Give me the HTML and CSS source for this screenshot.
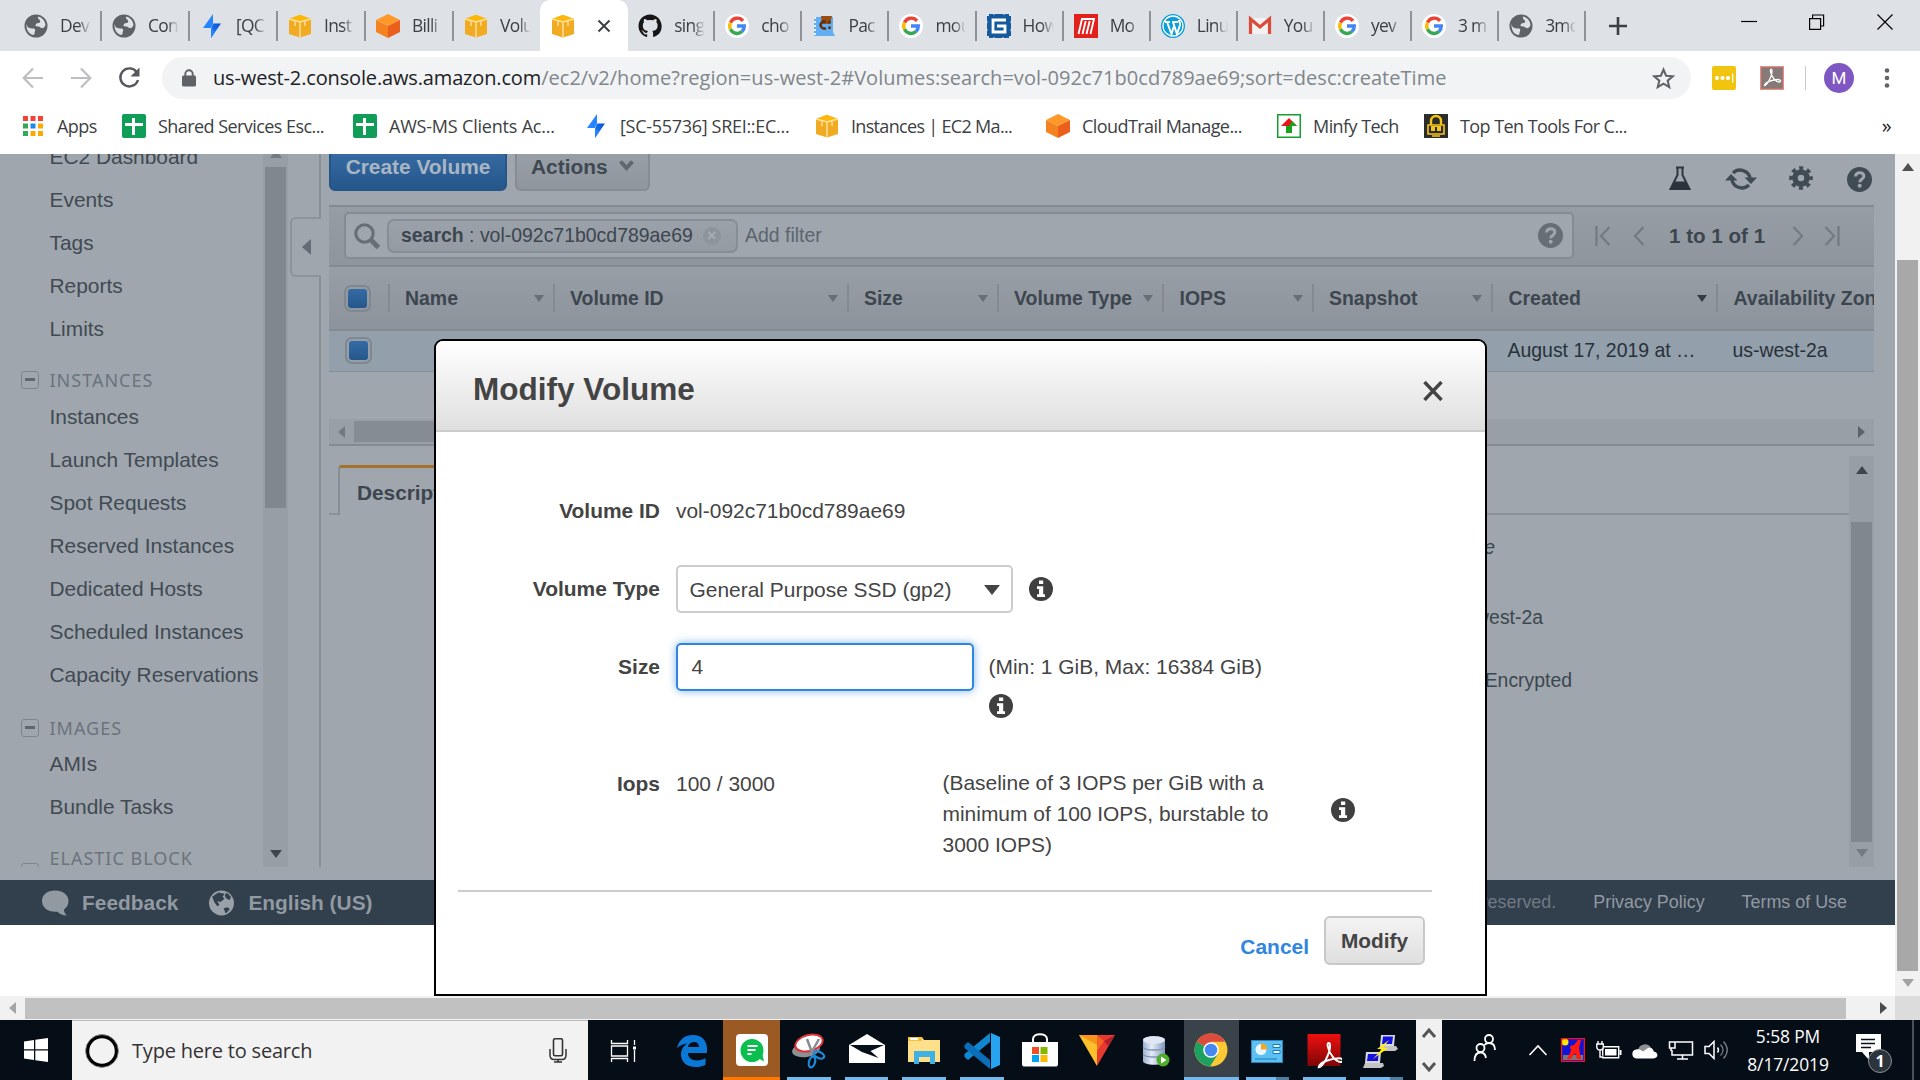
FILE: index.html
```html
<!DOCTYPE html>
<html lang="en">
<head>
<meta charset="utf-8">
<title>Volumes | EC2 Management Console</title>
<link rel="stylesheet" href="styles.css">
</head>
<body>
<svg class="defs" width="0" height="0">
  <defs>
    <linearGradient id="g-red" x1="0" y1="0" x2="0" y2="1"><stop offset="0" stop-color="#f01010"/><stop offset="1" stop-color="#7c0606"/></linearGradient>
    <linearGradient id="g-bolt" x1="1" y1="0" x2="0" y2="1"><stop offset="0" stop-color="#0052cc"/><stop offset="1" stop-color="#2684ff"/></linearGradient>
    <linearGradient id="g-db" x1="0" x2="1"><stop offset="0" stop-color="#9fb2cf"/><stop offset=".4" stop-color="#e4edf8"/><stop offset="1" stop-color="#8398bb"/></linearGradient>
  </defs>
  <symbol id="globe" viewBox="0 0 24 24"><circle cx="12" cy="12" r="11.5" fill="#5f6368"/><path d="M2.500 9.500C3 14 5.500 14.500 9.500 14.500c1.500 0 2 1 1.500 2.500l-1 4C6 21 2 17 2.500 9.500zM14 2.500c4 1 7 4 7.500 8.500-1 3-3 4-5 2.500-1.500-1.200-3-1-5-1.500 0-2 1-3 3-3 1.500 0 2-1 1.500-2.500-.5-1.200-2.500-1-2-4z" fill="#dee1e6"/></symbol>
  <symbol id="bolt" viewBox="0 0 24 24"><path d="M13 0 3 14h8l2-5z" fill="#2684ff"/><path d="M11 24 21 9.500h-8L11 15z" fill="url(#g-bolt)"/><path d="M11 13.500V24l4-6z" fill="#2684ff"/></symbol>
  <symbol id="cube-y" viewBox="0 0 24 24"><path d="M1 5 12 1l11 4v15l-11 3.500L1 20z" fill="#f0ab23"/><path d="M1 5 12 .8 23 5l-11 3z" fill="#ffb70a"/><path d="M12 8v15M1 5l11 3 11-3" fill="none" stroke="#ffe3a0" stroke-width="1.400"/><path d="M7 7v5M17 7v5" stroke="#ffe3a0" stroke-width="1.300"/></symbol>
  <symbol id="cube-o" viewBox="0 0 24 24"><path d="M12 0 24 6 12 12 0 6z" fill="#ff9a2a"/><path d="M0 6l12 6v12L0 18z" fill="#f58220"/><path d="M24 6 12 12v12l12-6z" fill="#ea5f1b"/></symbol>
  <symbol id="github" viewBox="0 0 24 24"><path fill="#171515" d="M12 .5C5.600.5.5 5.600.5 12c0 5.100 3.300 9.400 7.900 10.900.6.1.8-.3.8-.6v-2c-3.200.7-3.900-1.500-3.900-1.500-.5-1.300-1.300-1.700-1.300-1.700-1-.7.1-.7.1-.7 1.200.1 1.800 1.200 1.800 1.200 1 1.800 2.700 1.300 3.400 1 .1-.8.400-1.300.7-1.600-2.600-.3-5.200-1.300-5.200-5.700 0-1.300.4-2.300 1.200-3.100-.1-.3-.5-1.500.1-3.100 0 0 1-.3 3.200 1.200a11 11 0 0 1 5.800 0c2.200-1.500 3.200-1.200 3.200-1.200.6 1.600.2 2.800.1 3.100.7.800 1.200 1.800 1.200 3.100 0 4.400-2.700 5.400-5.300 5.700.4.4.8 1.100.8 2.100v3.200c0 .3.200.7.800.6a11.500 11.500 0 0 0 7.800-10.900C23.500 5.600 18.400.5 12 .5z"/></symbol>
  <symbol id="google" viewBox="0 0 24 24"><circle cx="12" cy="12" r="12" fill="#fff"/><g fill="none" stroke-width="3.400"><path d="M18 6.900A7.300 7.300 0 0 0 5.500 8.700" stroke="#ea4335"/><path d="M5.500 8.700a7.300 7.300 0 0 0 0 6.600" stroke="#fbbc05"/><path d="M5.500 15.300A7.300 7.300 0 0 0 17 17.500" stroke="#34a853"/><path d="M12 12h7.300a7.300 7.300 0 0 1-2.300 5.500" stroke="#4285f4"/></g></symbol>
  <symbol id="book" viewBox="0 0 24 24"><path d="M2 3h19v15l2 4H2z" fill="#63aef0"/><path d="M9 2h11l-2 8h-8z" fill="#9a4d12"/><path d="M3 3v18" stroke="#dff0ff" stroke-width="2" stroke-dasharray="2 2"/><path d="M14 8a3.500 3.500 0 1 0 0 6M17.500 7v2.500m0 3V15" fill="none" stroke="#5a3216" stroke-width="2.500"/></symbol>
  <symbol id="gbox" viewBox="0 0 24 24"><path d="M0 2h2V0h4l1 1 1-1h8l1 1 1-1h4v2h2v5l-1 1 1 1v6l-1 1 1 1v5h-2v2h-5l-1-1-1 1H8l-1-1-1 1H2v-2H0v-5l1-1-1-1V9l1-1-1-1z" fill="#155a9c"/><path d="M19 6H6v12h12v-6h-8" fill="none" stroke="#fff" stroke-width="2.800"/></symbol>
  <symbol id="redm" viewBox="0 0 24 24"><path d="M0 0h24v24H0z" fill="#e2211c"/><path d="M4.500 20 8 5h12l-3.500 15M11.700 7 8.500 20M15.700 7 12.500 20" fill="none" stroke="#fff" stroke-width="1.900"/></symbol>
  <symbol id="wp" viewBox="0 0 24 24"><circle cx="12" cy="12" r="12" fill="#0a9fd8"/><circle cx="12" cy="12" r="10" fill="none" stroke="#fff" stroke-width="1.300"/><path d="M4 8h5M11 8h6M6 8l4.500 12L13 12M12 8l4 12 3-9c.6-2-1-3-1-5" fill="none" stroke="#fff" stroke-width="2"/></symbol>
  <symbol id="gmail" viewBox="0 0 24 24"><path d="M2 4h20v16H2z" fill="#f2f2f2"/><path d="M2.500 20V5L12 13l9.500-8v15" fill="none" stroke="#dd4b39" stroke-width="3.200"/></symbol>
  <symbol id="sheet" viewBox="0 0 24 24"><rect width="24" height="24" rx="2" fill="#109d58"/><path d="M11.500 4v17M3 10.500h18" stroke="#fff" stroke-width="3"/></symbol>
  <symbol id="apps" viewBox="0 0 20 20"><path d="M0 0h5v5H0zm7.500 0h5v5h-5zM15 0h5v5h-5z" fill="#f44336"/><path d="M0 7.500h5v5H0zM0 15h5v5H0z" fill="#34a853"/><path d="M7.500 7.500h5v5h-5z" fill="#1e88e5"/><path d="M15 7.500h5v5h-5zM7.500 15h5v5h-5zm7.500 0h5v5h-5z" fill="#fbab00"/></symbol>
  <symbol id="minfy" viewBox="0 0 24 24"><rect x=".75" y=".75" width="22.500" height="22.500" fill="#fff" stroke="#14a02c" stroke-width="1.500"/><path d="M12 4 4 12h16z" fill="#e8161b"/><path d="M9 12h6v7H9z" fill="#17a31b"/><path d="m12 12 8 0-5-5z" fill="#17a31b"/></symbol>
  <symbol id="lockbox" viewBox="0 0 24 24"><path d="M0 0h24v24H0z" fill="#2c2c2c"/><path d="M7 11V7a5 5 0 0 1 10 0v4" fill="none" stroke="#f5c518" stroke-width="2.400"/><path d="M4 11h16v9H4zM8 22h8" fill="none" stroke="#f5c518" stroke-width="1.600"/><path d="M7 12h10v5H7z" fill="#f5c518"/><path d="M12 13v4" stroke="#2c2c2c" stroke-width="2"/></symbol>
  <symbol id="info" viewBox="0 0 24 24"><circle cx="12" cy="12" r="12" fill="#404040"/><path d="M10 3.500h4.200v3.400H10zM8 9.300h6.200v7.900H16V20H8v-2.800h2v-5.100H8z" fill="#fff"/></symbol>
  <symbol id="help" viewBox="0 0 24 24"><circle cx="12" cy="12" r="12" fill="currentColor"/><path d="M8.200 9.200c0-5 8-5 8-.3 0 3-4 2.700-4 5.700" fill="none" stroke="#9fa6ae" stroke-width="2.900"/><circle cx="12.200" cy="18" r="1.900" fill="#9fa6ae"/></symbol>
  <symbol id="acro" viewBox="0 0 24 24"><path d="M4.500 19.500c2.500 0 8-9.500 7.500-15-.2-2-2-1.500-1.500 1C11.500 11 16 16 19 16c2.500 0 2-2.500-1-2.500-4.500 0-13 2.500-13.500 6z" fill="none" stroke="#fff" stroke-width="1.300"/></symbol>
</svg>

<header class="tabs">
  <div class="tab"><svg class="i24"><use href="#globe"/></svg><span>Dev</span></div>
  <div class="tab"><svg class="i24"><use href="#globe"/></svg><span>Con</span></div>
  <div class="tab"><svg class="i24"><use href="#bolt"/></svg><span>[QC</span></div>
  <div class="tab"><svg class="i24"><use href="#cube-y"/></svg><span>Inst</span></div>
  <div class="tab"><svg class="i24"><use href="#cube-o"/></svg><span>Billi</span></div>
  <div class="tab tab-last"><svg class="i24"><use href="#cube-y"/></svg><span>Volu</span></div>
  <div class="tab tab-active"><svg class="i24"><use href="#cube-y"/></svg><svg class="tab-x" viewBox="0 0 14 14"><path d="M1.500 1.500 12.500 12.500M12.500 1.500 1.500 12.500" stroke="#3c4043" stroke-width="2"/></svg></div>
  <div class="tab"><svg class="i24"><use href="#github"/></svg><span>sing</span></div>
  <div class="tab"><svg class="i24"><use href="#google"/></svg><span>cho</span></div>
  <div class="tab"><svg class="i24"><use href="#book"/></svg><span>Pac</span></div>
  <div class="tab"><svg class="i24"><use href="#google"/></svg><span>mou</span></div>
  <div class="tab"><svg class="i24"><use href="#gbox"/></svg><span>How</span></div>
  <div class="tab"><svg class="i24"><use href="#redm"/></svg><span>Mo</span></div>
  <div class="tab"><svg class="i24"><use href="#wp"/></svg><span>Linu</span></div>
  <div class="tab"><svg class="i24"><use href="#gmail"/></svg><span>You</span></div>
  <div class="tab"><svg class="i24"><use href="#google"/></svg><span>yev</span></div>
  <div class="tab"><svg class="i24"><use href="#google"/></svg><span>3 m</span></div>
  <div class="tab"><svg class="i24"><use href="#globe"/></svg><span>3mo</span></div>
  <svg class="tab-new" viewBox="0 0 18 18"><path d="M9 0v18M0 9h18" stroke="#3c4043" stroke-width="2.600"/></svg>
  <div class="winctl">
    <svg width="16" height="16"><path d="M0 7.500h16" stroke="#000" stroke-width="1.200"/></svg>
    <svg width="16" height="16"><path d="M.6 4.600h11v10.800H.6zM3.600 4.600V1h11v11h-3" fill="none" stroke="#000" stroke-width="1.200"/></svg>
    <svg width="16" height="16"><path d="M.5.500l15 15M15.500.5l-15 15" stroke="#000" stroke-width="1.200"/></svg>
  </div>
</header>

<div class="toolbar">
  <svg class="nav-ic" viewBox="0 0 22 22"><path d="M21 11H2M11 1.500 1.700 11 11 20.500" fill="none" stroke="#bcbec0" stroke-width="2.200"/></svg>
  <svg class="nav-ic" viewBox="0 0 22 22"><path d="M1 11h19M11 1.500 20.300 11 11 20.500" fill="none" stroke="#bcbec0" stroke-width="2.200"/></svg>
  <svg class="nav-ic" viewBox="0 0 22 22"><path d="M18.600 5A9 9 0 1 0 20 13" fill="none" stroke="#54585c" stroke-width="2.400"/><path d="M21.500.5v9h-9z" fill="#54585c"/></svg>
  <div class="urlbar">
    <svg class="lock" viewBox="0 0 14 18"><rect y="6.500" width="14" height="11" rx="1.500" fill="#5f6368"/><path d="M3.300 8V5a3.700 3.700 0 0 1 7.400 0v3" fill="none" stroke="#5f6368" stroke-width="1.900"/></svg>
    <span class="url"><span class="host">us-west-2.console.aws.amazon.com</span><span class="path">/ec2/v2/home?region=us-west-2#Volumes:search=vol-092c71b0cd789ae69;sort=desc:createTime</span></span>
    <svg class="star" viewBox="0 0 22 22"><path d="m11 2.500 2.500 5.900 6.300.5-4.800 4.200 1.500 6.200L11 16l-5.500 3.300L7 13.100 2.200 8.900l6.300-.5z" fill="none" stroke="#5f6368" stroke-width="2"/></svg>
  </div>
  <svg class="ext" viewBox="0 0 24 24"><rect width="24" height="24" rx="2" fill="#f1c40f"/><g fill="#fff"><circle cx="5" cy="12" r="2.100"/><circle cx="10.500" cy="12" r="2.100"/><circle cx="16" cy="12" r="2.100"/><path d="M20 7.500h1.300v9H20z"/></g></svg>
  <svg class="ext" viewBox="0 0 24 24"><path d="M.6.6h22.800v22.800H.6z" fill="#857a78" stroke="#f08a80" stroke-width="1.200"/><use href="#acro"/></svg>
  <i class="tool-sep"></i>
  <span class="avatar">M</span>
  <svg class="dots" viewBox="0 0 6 20"><g fill="#5f6368"><circle cx="3" cy="2.500" r="2.300"/><circle cx="3" cy="10" r="2.300"/><circle cx="3" cy="17.500" r="2.300"/></g></svg>
</div>

<nav class="bookmarks">
  <a class="bm b0"><svg class="i20"><use href="#apps"/></svg>Apps</a>
  <a class="bm b1"><svg class="i24"><use href="#sheet"/></svg>Shared Services Esc...</a>
  <a class="bm b2"><svg class="i24"><use href="#sheet"/></svg>AWS-MS Clients Ac...</a>
  <a class="bm b3"><svg class="i24"><use href="#bolt"/></svg>[SC-55736] SREI::EC...</a>
  <a class="bm b4"><svg class="i24"><use href="#cube-y"/></svg>Instances | EC2 Ma...</a>
  <a class="bm b5"><svg class="i24"><use href="#cube-o"/></svg>CloudTrail Manage...</a>
  <a class="bm b6"><svg class="i24"><use href="#minfy"/></svg>Minfy Tech</a>
  <a class="bm b7"><svg class="i24"><use href="#lockbox"/></svg>Top Ten Tools For C...</a>
  <span class="more">»</span>
</nav>

<div class="viewport">
  <div class="page">
    <div class="console">
      <aside class="side">
        <div class="side-list">
          <a>EC2 Dashboard</a><a>Events</a><a>Tags</a><a>Reports</a><a>Limits</a>
          <h4><i></i>INSTANCES</h4>
          <a>Instances</a><a>Launch Templates</a><a>Spot Requests</a><a>Reserved Instances</a><a>Dedicated Hosts</a><a>Scheduled Instances</a><a>Capacity Reservations</a>
          <h4 class="images"><i></i>IMAGES</h4>
          <a>AMIs</a><a>Bundle Tasks</a>
          <h4><i class="low"></i>ELASTIC BLOCK</h4>
        </div>
        <div class="vbar side-bar"><i class="up faint"></i><b></b><i class="down"></i></div>
        <div class="gutter"><div class="fold"><i></i></div></div>
      </aside>

      <main class="main">
        <div class="actions">
          <button class="btn-blue">Create Volume</button>
          <button class="btn-gray">Actions <svg width="15" height="12" viewBox="0 0 15 12"><path d="m1.500 1.500 6 6.500 6-6.500" fill="none" stroke="#5f6871" stroke-width="4"/></svg></button>
          <div class="tools">
            <svg class="t-flask" viewBox="0 0 24 26"><path d="M8 1.500h8M9.500 2v7L2.500 23h19l-7-14V2" fill="none" stroke="#2e3740" stroke-width="2"/><path d="M6 15.500h12L22 24H2z" fill="#2a333c"/></svg>
            <svg class="t-sync" viewBox="0 0 32 26"><path d="M8 7a10 9.500 0 0 1 17 5M24 19a10 9.500 0 0 1-17-5" fill="none" stroke="#414b54" stroke-width="3.400"/><path d="M0 14.500h12.500L6 8zM19.500 11.500H32L26 18z" fill="#414b54"/></svg>
            <svg class="t-gear" viewBox="0 0 24 24"><circle cx="12" cy="12" r="6" fill="none" stroke="#414b54" stroke-width="5.500"/><circle cx="12" cy="12" r="9.700" fill="none" stroke="#414b54" stroke-width="4.200" stroke-dasharray="3.900 3.718" stroke-dashoffset="2"/></svg>
            <svg class="t-help i25"><use href="#help"/></svg>
          </div>
        </div>

        <div class="filter">
          <div class="fbox">
            <svg class="mag" viewBox="0 0 26 26"><circle cx="10.500" cy="10.500" r="8.700" fill="none" stroke="#666e76" stroke-width="3"/><path d="m17 17 7.500 7.500" stroke="#666e76" stroke-width="5"/></svg>
            <span class="chip"><b>search</b>&nbsp;: vol-092c71b0cd789ae69 <i>×</i></span>
            <span class="add">Add filter</span>
            <svg class="f-help i25"><use href="#help"/></svg>
          </div>
          <div class="pager">
            <svg width="16" height="20"><path d="M1.500 0v20M14.500 1 6 10l8.500 9" fill="none" stroke="#737b83" stroke-width="2.300"/></svg>
            <svg width="12" height="20"><path d="M10.500 1 2 10l8.500 9" fill="none" stroke="#737b83" stroke-width="2.300"/></svg>
            <b>1 to 1 of 1</b>
            <svg width="12" height="20"><path d="M1.500 1 10 10l-8.500 9" fill="none" stroke="#737b83" stroke-width="2.300"/></svg>
            <svg width="16" height="20"><path d="M14.500 0v20M1.500 1 10 10l-8.500 9" fill="none" stroke="#737b83" stroke-width="2.300"/></svg>
          </div>
        </div>

        <div class="grid head">
          <div class="ck"><i></i></div><div>Name</div><div>Volume ID</div><div>Size</div><div>Volume Type</div><div>IOPS</div><div>Snapshot</div><div class="sorted">Created</div><div class="last">Availability Zone</div>
        </div>
        <div class="grid row">
          <div class="ck"><i></i></div><div></div><div></div><div></div><div></div><div></div><div></div><div>August 17, 2019 at …</div><div>us-west-2a</div>
        </div>
        <div class="hbar grid-bar"><i class="left faint"></i><b></b><i class="right"></i></div>

        <section class="details">
          <div class="pane">
            <div class="tabline"><span class="dtab">Description</span></div>
            <p class="d1">in-use</p>
            <p class="d2">us-west-2a</p>
            <p class="d3">Not Encrypted</p>
          </div>
          <div class="vbar det-bar"><i class="up"></i><b></b><i class="down faint"></i></div>
        </section>
      </main>
    </div>

    <footer class="foot">
      <svg class="bubble" viewBox="0 0 27 25"><path d="M13 0c8 0 13.500 4.500 13.500 10.500 0 4-2 7-4.500 8.500 0 2.500 1 4.500 3 6-4 0-7.500-1.500-9.500-3.800C6 22 0 17 0 10.500 0 4.500 5 0 13 0z" fill="#9199a1"/></svg>
      <b class="fb">Feedback</b>
      <svg class="world" viewBox="0 0 24 24"><circle cx="12" cy="12" r="12" fill="#9aa1a8"/><path d="m3 6 6-4 6 1-2 3 2 2-4 3-3-1 2 4-2 1-3-4zM17 2l4 4-1 3-3-1-2-3zM14 17l4-1 2 2-4 4z" fill="#323f4d"/></svg>
      <b>English (US)</b>
      <span class="rights">All rights reserved.</span>
      <a>Privacy Policy</a>
      <a class="terms">Terms of Use</a>
    </footer>

    <div class="modal">
      <div class="m-head"><h2>Modify Volume</h2><svg width="20" height="20"><path d="m1.500 1 17 18M18.500 1l-17 18" stroke="#444" stroke-width="3.400"/></svg></div>
      <div class="m-body">
        <div class="f-row r-id"><label>Volume ID</label><span>vol-092c71b0cd789ae69</span></div>
        <div class="f-row r-type"><label>Volume Type</label><div class="select">General Purpose SSD (gp2)<i></i></div><svg class="i24 gap16"><use href="#info"/></svg></div>
        <div class="f-row r-size"><label>Size</label><div class="input">4</div><span class="hint">(Min: 1 GiB, Max: 16384 GiB)</span></div>
        <div class="f-row r-info"><svg class="i24"><use href="#info"/></svg></div>
        <div class="f-row r-iops"><label>Iops</label><span class="iops">100 / 3000</span><p>(Baseline of 3 IOPS per GiB with a minimum of 100 IOPS, burstable to 3000 IOPS)</p><svg class="i24"><use href="#info"/></svg></div>
      </div>
      <div class="m-foot"><a>Cancel</a><button class="modify">Modify</button></div>
    </div>
  </div>
  <div class="vbar page-bar"><i class="up"></i><b></b><i class="down faint"></i></div>
</div>
<div class="hbar page-hbar"><i class="left faint"></i><b></b><i class="right"></i><span class="corner"></span></div>

<div class="taskbar">
  <div class="start"><svg width="24" height="24" viewBox="0 0 24 24"><path d="M0 3.500 10 2v9.300H0zM11.300 1.800 24 0v11.300H11.300zM0 12.500h10V22L0 20.500zM11.300 12.500H24V24l-12.700-1.800z" fill="#fff"/></svg></div>
  <div class="search">
    <svg width="34" height="34" viewBox="0 0 34 34"><circle cx="17" cy="17" r="14.600" fill="none" stroke="#000" stroke-width="3.600"/><circle cx="17" cy="17" r="16.400" fill="none" stroke="#8a8a8a" stroke-width=".8"/></svg>
    <span>Type here to search</span>
    <svg class="mic" width="18" height="25" viewBox="0 0 18 25"><rect x="4.500" y=".8" width="9" height="17" rx="1.500" fill="none" stroke="#333" stroke-width="1.600"/><path d="M1 11v6c0 3 2 4.500 4 4.500h8c2 0 4-1.500 4-4.500v-6M9 21.500V24M5 24h8" fill="none" stroke="#333" stroke-width="1.500"/></svg>
  </div>
  <div class="apps">
    <div class="ap"><svg viewBox="0 0 36 36"><path d="M6.500 7v3.500h16V7M6.500 29v-3.500h16V29M6.500 13h16v10h-16zM29.500 7v5M29.500 17v12" fill="none" stroke="#fff" stroke-width="1.300"/><path d="M28 13.500h3v3h-3z" fill="#fff"/></svg></div>
    <div class="ap ap-edge"><svg viewBox="0 0 36 36"><path d="M3 15C5 6.500 11 2 19 2c9 0 14 6 14 13.500V20H14c0 4.500 3.500 7.500 9 7.500 3.500 0 6.500-1 8.500-2.200v6.400C29 33.200 25 34 21.500 34 12.500 34 7 28.500 7 21.500c0-4.800 2.500-9 6.500-11C9 10.800 5.500 12.500 3 15zm11-1h11c0-3-1.600-5-5.200-5-3.300 0-5.300 2.200-5.800 5z" fill="#0a78d7"/></svg></div>
    <div class="ap ap-hot"><svg viewBox="0 0 36 36"><rect x="2" y="2" width="32" height="32" rx="4" fill="#fff"/><path d="M18 7a11.500 11.500 0 1 1 0 23A11.500 11.500 0 0 1 18 7z" fill="#0bbf4f"/><path d="m24 26 6 3.500-1.500-7z" fill="#0bbf4f"/><path d="M13.500 14h10M13.500 18h8M13.500 22h4" stroke="#fff" stroke-width="2"/></svg></div>
    <div class="ap on"><svg viewBox="0 0 36 36"><ellipse cx="15" cy="17" rx="14" ry="7" fill="#8d8f93" transform="rotate(-8 15 17)"/><ellipse cx="18" cy="10" rx="14" ry="8" fill="#fff" stroke="#d93438" stroke-width="2" transform="rotate(-15 18 10)"/><path d="m16 6 6 16M28 6l-9 16" stroke="#888c92" stroke-width="2.500"/><g fill="none" stroke="#1c8adb" stroke-width="2.300"><ellipse cx="28" cy="22" rx="5.500" ry="3" transform="rotate(25 28 22)"/><ellipse cx="21" cy="29" rx="3" ry="5.500" transform="rotate(15 21 29)"/></g></svg></div>
    <div class="ap on"><svg viewBox="0 0 36 36"><path d="M0 12 18 1l18 11v18H0z" fill="#fff"/><path d="M1 12h34L21.500 18l8 7L13 19z" fill="#07101a"/></svg></div>
    <div class="ap on"><svg viewBox="0 0 36 36"><path d="M2 4h14l2 3h16v22H2z" fill="#ffe08a"/><path d="M2 4h14v4H2z" fill="#f7c331"/><path d="M4 5h8v2H4z" fill="#fff"/><path d="M8 31V18h21v13h-5v-7H13v7z" fill="#3fb2e3"/></svg></div>
    <div class="ap on"><svg viewBox="0 0 36 36"><path d="M26 0v9L4 27l-3.500-3v-3z" fill="#1287d1"/><path d="M4 9 26 27v9L.5 15v-3z" fill="#0a6fb8"/><path d="m27 0 9 4v28l-9 4z" fill="#26a4f2"/></svg></div>
    <div class="ap"><svg viewBox="0 0 36 36"><path d="M11 9V6c0-6.500 14-6.500 14 0v3" fill="none" stroke="#fff" stroke-width="2"/><path d="M0 9h36v22c0 2-1 2.500-2.500 2.500h-31C1 33.500 0 33 0 31z" fill="#fff"/><path d="M10 14h7v7h-7z" fill="#f25022"/><path d="M18.500 14h7v7h-7z" fill="#7fba00"/><path d="M10 22h7v7h-7z" fill="#00a4ef"/><path d="M18.500 22h7v7h-7z" fill="#ffb900"/></svg></div>
    <div class="ap"><svg viewBox="0 0 36 36"><path d="M0 2h18v31z" fill="#fbc02a"/><path d="M18 2h18L18 33z" fill="#e8392f"/><path d="m0 2 18 10V2z" fill="#f7941d"/><path d="m18 2 7 6-7 10z" fill="#f26522"/><path d="m36 2-11 6L29 13z" fill="#b01f30"/></svg></div>
    <div class="ap"><svg viewBox="0 0 36 36"><path d="M6 7c0-5 22-5 22 0v21c0 5-22 5-22 0z" fill="url(#g-db)"/><ellipse cx="17" cy="7" rx="11" ry="3.800" fill="#dfe8f4"/><path d="M6 14c2 4 20 4 22 0M6 21c2 4 20 4 22 0" fill="none" stroke="#7f93b5" stroke-width="1.300"/><circle cx="26" cy="27" r="6.500" fill="#4caf2a"/><path d="m24 23.500 5.500 3.500-5.500 3.500z" fill="#fff"/></svg></div>
    <div class="ap ap-cur"><svg viewBox="0 0 36 36"><circle cx="18" cy="18" r="16.500" fill="#fcc934"/><path d="M18 18 3.700 9.700A16.500 16.500 0 0 1 32.300 9.800H18z" fill="#dd4b3e"/><path d="M18 18 3.700 9.700A16.500 16.500 0 0 0 17 34.400L25 22z" fill="#1da160"/><circle cx="18" cy="18" r="7.800" fill="#fff"/><circle cx="18" cy="18" r="6.300" fill="#4688f1"/></svg></div>
    <div class="ap on two"><svg viewBox="0 0 36 36"><rect x="2.500" y="7.500" width="31" height="22" fill="#5cc1f2" stroke="#2a83b8"/><circle cx="12" cy="16.500" r="5.500" fill="#e6f7ff"/><path d="M12 16.500V10a6.500 6.500 0 0 1 6.500 6.500z" fill="#f3a52c"/><path d="M24 11.500h7v3h-7zM24 17.500h7v3h-7zM6 26h22" fill="#eaf8ff" stroke="#167cb8" stroke-width="1"/></svg></div>
    <div class="ap on"><svg viewBox="0 0 36 36"><rect x="1.500" y="1" width="33" height="32" fill="url(#g-red)"/><svg x="6" y="5" width="24" height="24"><use href="#acro"/></svg></svg></div>
    <div class="ap on two"><svg viewBox="0 0 36 36"><path d="M18 2h14l-1 11H17z" fill="#d9d9d9"/><path d="M20 3.500h10l-1 7.500H19z" fill="#1212e0"/><path d="M17 13h16l2 3-3 2H18z" fill="#c4c4c4"/><path d="M3 19h15l-1 11H2z" fill="#d9d9d9"/><path d="M5 21h10.500l-.5 7H4z" fill="#1212e0"/><path d="M2 30h18l1 3-3 2H0z" fill="#c4c4c4"/><path d="m26 7-12 9h5l-9 10 15-11h-5z" fill="#ffee10"/></svg></div>
  </div>
  <div class="updown"><svg width="16" height="46" viewBox="0 0 16 46"><path d="m2 10 6-7 6 7M2 36l6 7 6-7" fill="none" stroke="#555" stroke-width="3"/></svg></div>
  <div class="tray">
    <svg class="people" width="24" height="28" viewBox="0 0 24 28"><g fill="none" stroke="#fff" stroke-width="1.800"><circle cx="16" cy="5" r="4"/><circle cx="7.500" cy="14" r="4"/><path d="M1.500 27c0-5 2-8.500 6-8.500 3 0 5 2 5.500 5.500M11.500 11c1-1.500 2.500-2 4.500-2 4 0 6 3 6 7"/></g></svg>
    <svg class="chev" width="20" height="14"><path d="m1.500 12 8.500-9 8.500 9" fill="none" stroke="#fff" stroke-width="1.600"/></svg>
    <svg width="24" height="24" viewBox="0 0 24 24"><path d="M0 0h24v24H0z" fill="#1313d8"/><path d="M2 17h20v5H2z" fill="#777"/><circle cx="4" cy="4" r="3.500" fill="#ffe600"/><path d="m9 8 4-1 4-5h3l-2 8 2 11h-4l-2-6-4 6H6l4-8z" fill="#ff1a10"/><path d="M.6.6h22.800v22.800H.6z" fill="none" stroke="#f11" stroke-width="1.300"/></svg>
    <svg class="batt" width="26" height="20" viewBox="0 0 26 20"><path d="M6.700 6.700h16v11h-16z" fill="none" stroke="#fff" stroke-width="1.400"/><path d="M9 9h11.500v6.500H9zM23.500 10h2v5h-2z" fill="#fff"/><path d="M2 1v3M6 1v3M.8 4h6.500v3c0 2-1.300 3-3.200 3S.8 9 .8 7zM4 10v7h3" fill="#07101a" stroke="#fff" stroke-width="1.400"/></svg>
    <svg width="26" height="18" viewBox="0 0 26 18"><path d="M6 9a7 7 0 0 1 13-2l-8 7z" fill="#8d9196"/><path d="M4.500 17.500A4.500 4.500 0 0 1 4 8.600c3-1 5 0 7 2l5-3.500c3-1 5 .5 5.700 3.300 5 .6 5 7.100-.2 7.100z" fill="#fff"/></svg>
    <svg width="26" height="20" viewBox="0 0 26 20"><path d="M7 2h17.500v13H4v-5M9 19h11M14.500 15v4M1.500 2H7v6H1.500zM3 8v3" fill="none" stroke="#fff" stroke-width="1.500"/></svg>
    <svg width="26" height="22" viewBox="0 0 26 22"><path d="M1 7.500h4l5-5v17l-5-5H1z" fill="none" stroke="#fff" stroke-width="1.500"/><path d="M13.500 8.500q2 2.500 0 5" fill="none" stroke="#fff" stroke-width="1.400"/><path d="M16.500 5.500q5 5.500 0 11M19.500 2.500q7.500 8.500 0 17" fill="none" stroke="#767b80" stroke-width="1.300"/></svg>
  </div>
  <div class="clock">5:58 PM<br>8/17/2019</div>
  <div class="notif"><svg width="25" height="26" viewBox="0 0 25 26"><path d="M0 0h25v18H13v8l-7-8H0z" fill="#fff"/><path d="M5 5.500h14M5 9.500h14M5 13.500h10" stroke="#07101a" stroke-width="1.400"/></svg><span>1</span></div>
  <i class="peek"></i>
</div>
</body>
</html>
```
FILE: styles.css
```css
* { box-sizing: border-box; }
body { margin: 0; width: 1920px; height: 1080px; overflow: hidden; background: #fff; font-family: "Liberation Sans", Arial, sans-serif; display: flex; flex-direction: column; }
button { font-family: inherit; padding: 0; margin: 0; }
p, h2, h4 { margin: 0; font-weight: inherit; }
i { font-style: normal; }
svg { display: block; flex: none; }
.defs { position: absolute; }
.i20 { width: 20px; height: 20px; }
.i24 { width: 24px; height: 24px; }
.i25 { width: 25px; height: 25px; }

/* browser tabs */
.tabs { height: 51px; flex: none; background: #dee1e6; padding-left: 14px; display: grid; grid-template-columns: repeat(5, 88px) repeat(13, 87.1px) auto 1fr; align-items: center; font: 17.4px/26px "Open Sans", sans-serif; color: #3c4043; }
.tab { height: 30px; display: flex; align-items: center; gap: 12px; padding-left: 10px; border-right: 2px solid #8f9297; }
.tab span { width: 31px; overflow: hidden; white-space: nowrap; letter-spacing: -0.7px; padding-bottom: 2px; -webkit-mask-image: linear-gradient(90deg, #000 60%, transparent); mask-image: linear-gradient(90deg, #000 60%, transparent); }
.tab-last { border-right-color: transparent; }
.tab-active { height: 51px; background: #fff; border: 0; border-radius: 10px 10px 0 0; padding-left: 11px; gap: 22px; margin-left: -1px; }
.tab-x { width: 14px; height: 14px; }
.tab-new { width: 18px; height: 18px; margin-left: 23px; }
.winctl { justify-self: end; display: flex; gap: 52px; margin: -8px 27px 0 0; }

/* address row */
.toolbar { height: 54px; flex: none; display: flex; align-items: center; padding-left: 22px; }
.nav-ic { width: 22px; height: 22px; margin-right: 26px; }
.urlbar { width: 1529px; height: 42px; margin-left: -4px; border-radius: 21px; background: #f1f3f4; display: flex; align-items: center; padding: 0 16px 0 20px; }
.lock { width: 14px; height: 18px; }
.url { flex: 1; margin-left: 17px; font: 20px/30px "Open Sans", sans-serif; white-space: nowrap; }
.host { color: #202124; letter-spacing: -0.15px; }
.path { color: #80868b; letter-spacing: 0.04px; }
.star { width: 23px; height: 23px; }
.ext { width: 24px; height: 24px; margin-left: 24px; }
.urlbar + .ext { margin-left: 21px; }
.tool-sep { width: 1px; height: 24px; background: #c8cacc; margin-left: 21px; }
.avatar { width: 30px; height: 30px; border-radius: 50%; background: #7e57c2; color: #fff; font: 17px/30px Roboto, sans-serif; text-align: center; margin-left: 18px; }
.dots { width: 6px; height: 20px; margin-left: 30px; }

.bookmarks { height: 49px; flex: none; display: flex; align-items: center; padding: 0 29px 8px 23px; font: 18px/26px "Open Sans", sans-serif; letter-spacing: -0.56px; color: #3c4043; }
.bm { display: flex; align-items: center; gap: 12px; white-space: nowrap; }
.b0 { width: 99px; gap: 14px; }
.b1, .b2, .b3, .b4 { width: 231px; }
.b2 { letter-spacing: -0.2px; }
.b3 { letter-spacing: -0.3px; }
.b4 { letter-spacing: -0.68px; }
.b5 { width: 231px; }
.b6 { width: 147px; }
.more { margin-left: auto; font-size: 20px; color: #222; }

/* viewport */
.viewport { height: 842px; flex: none; display: flex; }
.page { width: 1895px; position: relative; background: #fff; }
.console { height: 726px; background: #9fa6ad; display: flex; overflow: hidden; }
.side { width: 321px; height: 713px; flex: none; display: flex; overflow: hidden; }
.side-list { width: 263px; padding-left: 49.5px; margin-top: -19px; color: #414a53; font-size: 20.9px; white-space: nowrap; }
.side-list a { display: block; height: 43px; line-height: 43px; }
.side-list h4 { display: flex; align-items: center; height: 45px; padding-top: 15px; margin-left: -29px; font: 18px/30px "Noto Sans", sans-serif; letter-spacing: 1px; color: #6b747d; }
.side-list .images { height: 46px; padding-top: 17px; }
.side-list h4 i { width: 18px; height: 18px; margin-right: 11px; border: 1px solid #7d858e; border-radius: 3px; padding: 6px 3px 7px; background: #5f6871 content-box; }
.side-list h4 .low { margin-top: 28px; }

.vbar { width: 25px; flex: none; display: flex; flex-direction: column; align-items: center; background: #979ea6; }
.vbar b { display: block; width: 21px; background: #80878f; }
.vbar i, .hbar i { width: 0; height: 0; border: 6px solid transparent; flex: none; }
.vbar .up { border-bottom: 8px solid #3d464f; border-top: 0; }
.vbar .down { border-top: 8px solid #3d464f; border-bottom: 0; }
.vbar .up.faint { border-bottom-color: #727a82; }
.vbar .down.faint { border-top-color: #727a82; }
.side-bar b { height: 341px; margin: 9px 0 342px; }
.side-bar .up { margin-top: -4px; }
.gutter { width: 33px; border-right: 2px solid #878f97; padding-top: 63px; }
.fold { width: 33px; height: 60px; margin-left: 2px; border: 2px solid #8b939b; border-right: 0; border-radius: 6px 0 0 6px; background: #9fa6ad; display: flex; align-items: center; padding-left: 10px; }
.fold i { width: 0; height: 0; border: 8px solid transparent; border-right: 9px solid #636c75; border-left: 0; }

.main { width: 1545px; margin-left: 8px; height: 713px; color: #3d464f; }
.actions { height: 51px; display: flex; align-items: flex-start; }
.actions button { height: 49px; margin-top: -12px; border-radius: 6px; font-weight: bold; font-size: 20.9px; line-height: 45px; }
.btn-blue { width: 178px; border: 2px solid #265587; background: linear-gradient(#3a6fa8, #25578c); color: #a9b5c2; }
.btn-gray { width: 135px; margin-left: 8px; border: 2px solid #858c94; background: linear-gradient(#9aa1a9, #8f969e); color: #3f4851; display: flex; align-items: center; padding-left: 14px !important; gap: 11px; }
.btn-gray svg { margin-top: -2px; }
.tools { margin-left: auto; display: flex; align-items: center; padding-top: 11px; color: #414b54; }
.t-flask { width: 24px; height: 28px; }
.t-sync { width: 32px; height: 28px; margin-left: 33px; }
.t-gear { width: 24px; height: 24px; margin: -2px 0 0 32px; }
.t-help { margin-left: 34px; margin-right: 2px; }

.filter { height: 62px; border-top: 2px solid #828a92; border-bottom: 2px solid #828a92; background: linear-gradient(#969da5, #8e959d); display: flex; align-items: center; padding: 0 0 1px 15px; font-size: 19.45px; }
.fbox { width: 1230px; height: 47px; border: 2px solid #838b93; border-radius: 5px; background: #9fa6ad; display: flex; align-items: center; padding: 0 9px 0 8px; }
.mag { width: 26px; height: 26px; }
.chip { width: 351px; height: 34px; margin-left: 7px; border: 2px solid #858d95; border-radius: 7px; background: linear-gradient(#9aa1a9, #949ba3); line-height: 29px; padding-left: 12px; white-space: nowrap; color: #3d464f; display: flex; align-items: center; }
.chip i { width: 18px; height: 18px; margin-left: 10px; border-radius: 50%; background: #8c949c; color: #a4abb2; font: bold 17px/17px "Liberation Sans", sans-serif; text-align: center; }
.add { margin-left: 7px; color: #5c656e; }
.f-help { margin-left: auto; color: #666e76; }
.pager { display: flex; align-items: center; margin-left: 21px; font-size: 20.6px; }
.pager b { margin: 0 27px 0 24px; }
.pager svg + svg { margin-left: 22px; }
.pager b + svg + svg { margin-left: 20px; }

.grid { display: grid; grid-template-columns: 60.5px 165px 294px 150px 165.5px 149.5px 179.5px 225px 1fr; overflow: hidden; font-size: 19.45px; white-space: nowrap; }
.head { height: 64px; background: linear-gradient(#979ea6, #8c939b); border-bottom: 2px solid #838b93; font-weight: bold; align-items: center; }
.head div { height: 28px; line-height: 28px; border-right: 2px solid #828a92; padding-left: 15.5px; display: flex; align-items: center; }
.head div::after { content: ""; border: 5px solid transparent; border-top: 7px solid #666e76; border-bottom: 0; margin: 0 9px 0 auto; }
.head .sorted::after { border-top-color: #333c45; }
.head .ck::after, .head .last::after { display: none; }
.head .last { border-right: 0; }
.grid .ck { padding-left: 15px; display: flex; align-items: center; }
.ck i { width: 27px; height: 27px; border: 2px solid #7f878f; border-radius: 7px; padding: 2px; background: linear-gradient(#356ba5, #25578b) content-box; flex: none; }
.row { height: 41px; background: #939fab; border-bottom: 1px solid #838f9a; align-items: center; color: #27313a; }
.row div { padding: 0 0 2px 14.5px; }
.row .ck { padding-left: 16px; }

.hbar { display: flex; align-items: center; }
.hbar .left { border-right: 7px solid #4a4a4a; border-left: 0; }
.hbar .right { border-left: 7px solid #4a4a4a; border-right: 0; }
.grid-bar { height: 27px; margin-top: 47px; background: #989fa7; border-bottom: 2px solid #838b93; }
.grid-bar .left { margin-left: 9px; border-right-color: #727a82; }
.grid-bar .right { margin-left: auto; margin-right: 9px; border-left-color: #5a636c; }
.grid-bar b { width: 800px; height: 21px; background: #858c94; margin-left: 9px; }

.details { height: 411px; margin-top: 10px; display: flex; }
.pane { flex: 1; padding-top: 9px; font-size: 19.4px; }
.tabline { height: 50px; padding-left: 9px; border-bottom: 2px solid #8a9199; display: flex; }
.dtab { width: 150px; height: 50px; padding-left: 17px; border-left: 2px solid #858d95; border-top: 3px solid #a3722c; border-radius: 4px 4px 0 0; background: #9fa6ad; font-weight: bold; font-size: 20.8px; line-height: 49px; }
.pane p { line-height: 30px; color: #3d464f; text-align: right; }
.d1 { margin: 17px 354px 0 0; font-style: italic; }
.d2 { margin: 40px 306px 0 0; }
.d3 { margin: 33px 277px 0 0; }
.det-bar b { height: 320px; margin: 48px 0 7px; }
.det-bar .up { margin-top: 10px; }

.foot { height: 45px; background: #323f4d; display: flex; align-items: center; padding-left: 42px; font-size: 20.9px; color: #9199a1; }
.bubble { width: 27px; height: 30px; }
.fb { margin-left: 13px; }
.world { width: 25px; height: 30px; margin: 0 14px 0 31px; }
.rights { margin-left: auto; font-size: 17.9px; color: #6f7a84; }
.foot a { margin-left: 37px; font-size: 17.9px; color: #9199a1; }
.foot .terms { margin-right: 48px; }

.page-bar { background: #f1f1f1; }
.page-bar .up { margin-top: 9px; border-bottom-color: #505050; }
.page-bar b { height: 711px; margin: 89px 0 8px; background: #a8a8a8; }
.page-bar .down.faint { border-top-color: #a3a3a3; }
.page-hbar { height: 24px; flex: none; background: #f1f1f1; }
.page-hbar b { width: 1821px; height: 21px; background: #c1c1c1; margin-left: 9px; }
.page-hbar .left { margin-left: 9px; border-right-color: #a3a3a3; }
.page-hbar .right { margin-left: 34px; }
.corner { width: 25px; height: 24px; background: #dcdcdc; margin-left: auto; }

/* dialog over the console */
.modal { position: absolute; left: 434px; top: 185px; width: 1053px; height: 657px; border: 2px solid #000; border-radius: 9px 9px 0 0; background: #fff; color: #444; font-size: 20.95px; overflow: hidden; display: flex; flex-direction: column; }
.m-head { height: 91px; flex: none; background: linear-gradient(#fff, #dfdfdf); border-bottom: 2px solid #ccc; display: flex; align-items: center; justify-content: space-between; padding: 8px 42px 0 37px; }
.m-head h2 { font-weight: bold; font-size: 31.5px; }
.m-head svg { margin-top: 2px; }
.m-body { height: 460px; flex: none; margin: 0 53px 0 22px; border-bottom: 2px solid #ccc; padding-top: 64px; }
.f-row { display: flex; align-items: center; }
.f-row label { width: 202px; margin-right: 16px; text-align: right; font-weight: bold; flex: none; }
.r-id { height: 30px; }
.r-type { height: 48px; margin-top: 39px; }
.select, .input { height: 48px; border: 2px solid #ccc; border-radius: 5px; line-height: 46px; padding-left: 11.5px; display: flex; align-items: center; flex: none; }
.select { width: 337px; padding-top: 1px; }
.select i { border: 8.5px solid transparent; border-top: 10px solid #444; border-bottom: 0; margin: 0 11px 0 auto; }
.gap16 { margin-left: 16px; }
.r-size { height: 48px; margin-top: 30px; }
.input { width: 298px; padding-left: 13.5px; border-color: #2f86de; box-shadow: 0 0 9px rgba(47, 134, 222, .6); }
.hint { margin-left: 14.5px; }
.r-info { height: 30px; padding-left: 530.5px; }
.r-iops { height: 93px; margin-top: 46px; align-items: flex-start; line-height: 31px; }
.r-iops label, .iops { padding-top: 1px; }
.iops { width: 266.5px; }
.r-iops p { width: 340px; }
.r-iops svg { margin: 31px 0 0 48px; }
.m-foot { display: flex; align-items: flex-start; justify-content: flex-end; padding: 24px 60px 0 0; }
.m-foot a { color: #2f86de; font-weight: bold; margin: 19px 15px 0 0; }
.modify { width: 101px; height: 49px; border: 2px solid #c8c8c8; border-radius: 6px; background: linear-gradient(#f3f3f3, #dfdfdf); color: #444; font-weight: bold; font-size: 20.8px; }

/* taskbar */
.taskbar { height: 60px; flex: none; background: #050d16; display: flex; align-items: stretch; color: #fff; }
.start { width: 72px; display: grid; place-items: center; }
.search { width: 516px; background: #f2f2f2; border-top: 1px solid #bbb; display: flex; align-items: center; padding: 0 21px 0 13px; color: #333; font: 20px/28px "Open Sans", sans-serif; letter-spacing: -0.2px; }
.search span { margin: 1px 0 0 13px; }
.mic { margin-left: auto; }
.apps { width: 828px; padding-left: 6px; display: grid; grid-template-columns: 58px 71px 57px repeat(7, 57.7px) 55px repeat(3, 57px); }
.ap { display: flex; justify-content: center; padding-top: 13px; border-bottom: 3px solid transparent; margin: 0 7px; }
.ap svg { width: 36px; height: 36px; }
.ap-edge { padding-left: 8px; }
.ap.on { border-bottom-color: #76b9ed; }
.ap.two { border-image: linear-gradient(90deg, #76b9ed 68%, #4f7ea3 68%) 3; border-width: 0 0 3px; border-style: solid; }
.ap-hot { margin: 0; background: #9b5a24; border-bottom-color: #ff7800; padding-top: 12px; }
.ap-cur { margin: 0; background: #3a424a; border-bottom-color: #76b9ed; padding-top: 12px; }
.updown { width: 26px; background: #f0f0f0; display: grid; place-items: center; }
.tray { width: 291px; display: flex; align-items: center; gap: 10px; padding-left: 31px; }
.people { margin-top: -4px; }
.chev { margin: 0 3px 0 21px; }
.batt { margin-left: 1px; }
.clock { width: 110px; text-align: center; font: 17.4px/28px "Open Sans", sans-serif; padding-top: 2px; letter-spacing: -0.1px; }
.notif { width: 55px; margin-left: 4px; position: relative; padding: 14px 0 0 9px; }
.notif span { position: absolute; left: 21px; top: 29px; width: 24px; height: 24px; border-radius: 50%; background: #2b333b; border: 1px solid #8a8f94; font: bold 16px/22px "Open Sans", sans-serif; text-align: center; }
.peek { width: 2px; margin-left: auto; margin-right: 6px; background: #4b5157; }
```
